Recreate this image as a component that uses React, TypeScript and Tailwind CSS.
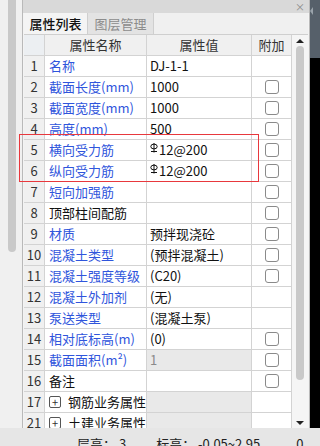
import React from 'react'

type Row = {
  no: number
  name: string
  value?: string
  rebar?: boolean
  blue?: boolean
  check?: boolean
  grayValue?: boolean
  dimValue?: boolean
  group?: boolean
}

const ROWS: Row[] = [
  { no: 1, name: '名称', value: 'DJ-1-1', blue: true },
  { no: 2, name: '截面长度(mm)', value: '1000', blue: true, check: true },
  { no: 3, name: '截面宽度(mm)', value: '1000', blue: true, check: true },
  { no: 4, name: '高度(mm)', value: '500', blue: true, check: true },
  { no: 5, name: '横向受力筋', value: '12@200', rebar: true, blue: true, check: true },
  { no: 6, name: '纵向受力筋', value: '12@200', rebar: true, blue: true, check: true },
  { no: 7, name: '短向加强筋', blue: true, check: true },
  { no: 8, name: '顶部柱间配筋', check: true },
  { no: 9, name: '材质', value: '预拌现浇砼', blue: true, check: true },
  { no: 10, name: '混凝土类型', value: '(预拌混凝土)', blue: true, check: true },
  { no: 11, name: '混凝土强度等级', value: '(C20)', blue: true, check: true },
  { no: 12, name: '混凝土外加剂', value: '(无)', blue: true },
  { no: 13, name: '泵送类型', value: '(混凝土泵)', blue: true },
  { no: 14, name: '相对底标高(m)', value: '(0)', blue: true, check: true },
  { no: 15, name: '截面面积(m²)', value: '1', blue: true, check: true, grayValue: true, dimValue: true },
  { no: 16, name: '备注', check: true },
  { no: 17, name: '钢筋业务属性', group: true, grayValue: true },
  { no: 21, name: '土建业务属性', group: true, grayValue: true },
]

const font = { fontFamily: '"Noto Sans CJK SC", "Noto Sans", sans-serif' }

function RebarIcon() {
  return (
    <svg width="8" height="10" viewBox="0 0 8 10" className="mr-[1px] -mt-[5px]">
      <ellipse cx="4" cy="3.5" rx="3.2" ry="2.4" fill="none" stroke="#111" strokeWidth="1" />
      <line x1="4" y1="0" x2="4" y2="9.5" stroke="#111" strokeWidth="1" />
      <line x1="1" y1="8.5" x2="7" y2="8.5" stroke="#111" strokeWidth="1" />
    </svg>
  )
}

function Checkbox() {
  return <div className="w-[14px] h-[14px] border border-[#8a8a8a] rounded-[3px] bg-white" />
}

export default function App() {
  return (
    <div className="relative w-[320px] h-[446px] overflow-hidden flex flex-col bg-[#f0f0f0] text-[13px] text-[#111]" style={font}>
      <div className="flex h-[428px] shrink-0">
        {/* left strip with neighbour scrollbar */}
        <div className="w-[22px] shrink-0 pl-[8px]">
          <div className="w-[8px] h-[252px] bg-[#c9c9c9] rounded-b-[4px]" />
        </div>

        {/* property panel */}
        <div className="w-[288px] shrink-0 flex flex-col border-l border-r border-[#b9b9b9] px-[1px] bg-[#f3f3f3]">
          <div className="h-[13px] shrink-0 bg-[#d9d9d9] flex items-center justify-end pr-[4px] -mx-[1px]">
            <span className="text-[10px] leading-[13px] text-[#8a8a8a]">×</span>
          </div>

          <div className="h-[22px] shrink-0 flex border-b border-[#cfcfcf] bg-[#f0f0f0]">
            <div className="w-[64px] flex items-center justify-center bg-[#f4f4f4] border-r border-[#cfcfcf] text-[#111] font-medium">
              属性列表
            </div>
            <div className="w-[66px] flex items-center justify-center bg-[#e3e3e3] border-r border-[#cfcfcf] text-[#8c8c8c]">
              图层管理
            </div>
          </div>

          <div className="flex flex-1 min-h-0">
            <div className="w-[268px] shrink-0 overflow-hidden bg-white">
              <div className="grid grid-cols-[21px_102px_105px_40px] h-[21px] bg-[#f0f0f0] text-[#333]">
                <div className="border-r border-b border-[#d3d3d3] bg-[#eceff2]" />
                <div className="border-r border-b border-[#d3d3d3] flex items-center justify-center">属性名称</div>
                <div className="border-r border-b border-[#d3d3d3] flex items-center justify-center">属性值</div>
                <div className="border-r border-b border-[#d3d3d3] flex items-center justify-center">附加</div>
              </div>
              {ROWS.map(row => (
                <div key={row.no} className="grid grid-cols-[21px_102px_105px_40px] h-[21px]">
                  <div className="border-r border-b border-[#d3d3d3] bg-[#f0f0f0] flex items-center justify-center text-[#333]">
                    {row.no}
                  </div>
                  <div className={`border-r border-b border-[#d3d3d3] flex items-center pl-[4px] whitespace-nowrap overflow-hidden ${row.blue ? 'text-[#2f55dc]' : 'text-[#111]'}`}>
                    {row.group && (
                      <span className="w-[12px] h-[12px] mr-[7px] border border-[#555] rounded-[2px] flex items-center justify-center text-[11px] leading-none text-[#333]">
                        +
                      </span>
                    )}
                    {row.name}
                  </div>
                  <div className={`border-r border-b border-[#d3d3d3] flex items-center pl-[3px] whitespace-nowrap overflow-hidden ${row.grayValue ? 'bg-[#e9e9e9]' : ''} ${row.dimValue ? 'text-[#8a8a8a]' : 'text-[#111]'}`}>
                    {row.rebar && <RebarIcon />}
                    {row.value}
                  </div>
                  <div className="border-r border-b border-[#d3d3d3] flex items-center justify-center">
                    {row.check && <Checkbox />}
                  </div>
                </div>
              ))}
            </div>

            {/* scrollbar */}
            <div className="w-[16px] shrink-0 bg-[#f5f5f5] flex flex-col items-center pt-[4px] pb-[3px]">
              <div className="w-0 h-0 border-l-[4px] border-r-[4px] border-b-[4px] border-l-transparent border-r-transparent border-b-[#222]" />
              <div className="w-[8px] h-[334px] mt-[3px] bg-[#c9c9c9] rounded-[4px]" />
              <div className="flex-1" />
              <div className="w-0 h-0 border-l-[4px] border-r-[4px] border-t-[4px] border-l-transparent border-r-transparent border-t-[#222]" />
            </div>
          </div>
        </div>

        {/* right dark strip */}
        <div className="w-[10px] shrink-0 flex flex-col">
          <div className="h-[58px] bg-[#56606a] pt-[7px]">
            <div className="w-0 h-0 border-t-[4px] border-b-[4px] border-r-[3px] border-t-transparent border-b-transparent border-r-[#9aa3ab]" />
          </div>
          <div className="flex-1 bg-black" />
        </div>
      </div>

      {/* status bar */}
      <div className="h-[18px] shrink-0 bg-[#e6e6e6] overflow-hidden pt-[6px] flex text-[#222] whitespace-nowrap">
        <span className="ml-[77px]">层高： 3</span>
        <span className="ml-[30px]">标高： -0.05~2.95</span>
        <span className="ml-[36px]">0</span>
      </div>

      {/* red highlight annotation */}
      <div className="absolute left-[19px] top-[134px] w-[240px] h-[48px] border border-[#e8383d] pointer-events-none" />
    </div>
  )
}
